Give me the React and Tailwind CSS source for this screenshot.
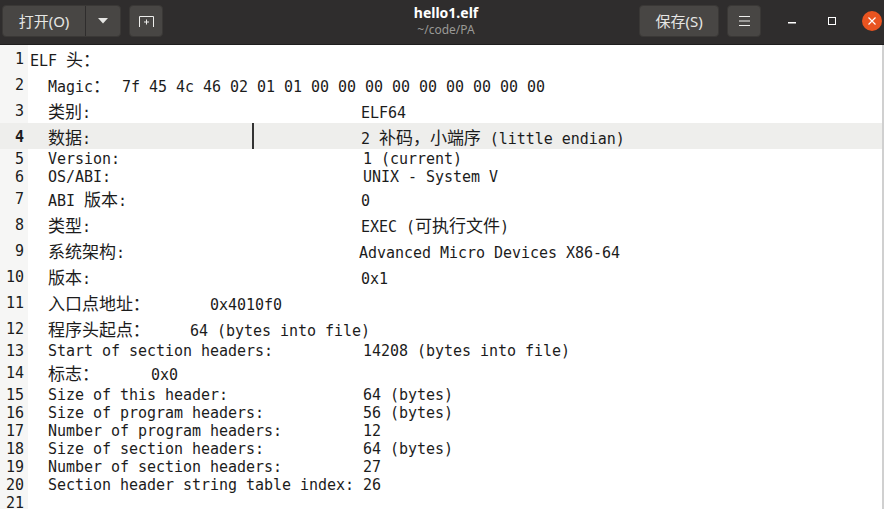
import React from "react";

const mono = "font-['DejaVu_Sans_Mono','Noto_Sans_CJK_SC',monospace]";
const ui = "font-['Noto_Sans','Noto_Sans_CJK_SC',sans-serif]";

const rows = [
  { tall: true, text: "ELF 头：", first: true },
  { tall: true, text: "Magic：", w: "w-[74px]", value: "7f 45 4c 46 02 01 01 00 00 00 00 00 00 00 00 00" },
  { tall: true, text: "类别:", w: "w-[313px]", value: "ELF64" },
  { tall: true, text: "数据:", w: "w-[313px]", value: "2 补码，小端序 (little endian)", current: true },
  { text: "Version:", w: "w-[315px]", value: "1 (current)" },
  { text: "OS/ABI:", w: "w-[315px]", value: "UNIX - System V" },
  { tall: true, text: "ABI 版本:", w: "w-[313px]", value: "0" },
  { tall: true, text: "类型:", w: "w-[313px]", value: "EXEC (可执行文件)" },
  { tall: true, text: "系统架构:", w: "w-[311px]", value: "Advanced Micro Devices X86-64" },
  { tall: true, text: "版本:", w: "w-[313px]", value: "0x1" },
  { tall: true, text: "入口点地址：", w: "w-[162px]", value: "0x4010f0" },
  { tall: true, text: "程序头起点：", w: "w-[142px]", value: "64 (bytes into file)" },
  { text: "Start of section headers:", w: "w-[315px]", value: "14208 (bytes into file)" },
  { tall: true, text: "标志：", w: "w-[103px]", value: "0x0" },
  { text: "Size of this header:", w: "w-[315px]", value: "64 (bytes)" },
  { text: "Size of program headers:", w: "w-[315px]", value: "56 (bytes)" },
  { text: "Number of program headers:", w: "w-[315px]", value: "12" },
  { text: "Size of section headers:", w: "w-[315px]", value: "64 (bytes)" },
  { text: "Number of section headers:", w: "w-[315px]", value: "27" },
  { text: "Section header string table index:", w: "w-[315px]", value: "26" },
  { text: "" },
];

// CJK runs are a bit larger than the latin text next to them
function Mixed({ text }) {
  return text.split(/([\u3000-\u9fff\uff00-\uffef]+)/).map((part, i) =>
    i % 2 ? <span key={i} className="text-[17px]">{part}</span> : part
  );
}

function Btn({ className, children }) {
  return (
    <div className={`h-8 flex items-center justify-center bg-[#484644] border border-[#3a3836] rounded-[4px] text-[#e6e6e4] text-[15px] ${ui} ${className}`}>
      {children}
    </div>
  );
}

function Header() {
  return (
    <header className="h-[45px] shrink-0 flex items-center pb-[2px] bg-[#2f2d2d] border-b border-[#1f1e1e] text-white">
      <div className="flex-1 basis-0 flex items-center gap-2 pl-[2px]">
        <div className="flex h-8 rounded-[4px] bg-[#484644] border border-[#3a3836] text-[#e6e6e4] text-[15px]">
          <div className={`w-[83px] flex items-center justify-center border-r border-[#2f2d2d] ${ui}`}>打开(O)</div>
          <div className="w-[34px] flex items-center justify-center">
            <svg width="10" height="6" viewBox="0 0 10 6"><path d="M0 0h10L5 5.5z" fill="#e6e6e4" /></svg>
          </div>
        </div>
        <Btn className="w-[34px]">
          <svg width="15" height="11" viewBox="0 0 15 11" fill="none" stroke="#eeeeec" strokeWidth="1">
            <path d="M.5 11V.5h14V11" />
            <path d="M7.5 3.5v5M5 6h5" />
          </svg>
        </Btn>
      </div>
      <div className="flex flex-col items-center pl-[6px] leading-none">
        <span className={`text-[14px] font-bold leading-[17px] ${ui}`}>hello1.elf</span>
        <span className={`text-[12px] leading-[17px] text-[#9a9996] ${ui}`}>~/code/PA</span>
      </div>
      <div className="flex-1 basis-0 flex items-center justify-end">
        <Btn className="w-[80px] mr-2">保存(S)</Btn>
        <Btn className="w-[34px]">
          <svg width="11" height="10" viewBox="0 0 11 10" stroke="#eeeeec" strokeWidth="1">
            <path d="M0 .5h11M0 5h11M0 9.5h11" />
          </svg>
        </Btn>
        <div className="w-[62px] flex justify-center pt-[4px]">
          <svg width="8" height="2" viewBox="0 0 8 2"><rect width="8" height="1.5" fill="#fff" /></svg>
        </div>
        <div className="w-[18px] flex justify-center">
          <svg width="9" height="9" viewBox="0 0 9 9" fill="none" stroke="#fff" strokeWidth="1"><rect x=".5" y=".5" width="7" height="7" /></svg>
        </div>
        <div className="w-[20px] h-[20px] rounded-full bg-[#e95420] flex items-center justify-center ml-[21px] mr-[2px]">
          <svg width="10" height="10" viewBox="0 0 10 10" stroke="#fff" strokeWidth="1.2"><path d="M1.5 1.5l7 7M8.5 1.5l-7 7" /></svg>
        </div>
      </div>
    </header>
  );
}

export default function App() {
  return (
    <div className="w-[884px] h-[509px] flex flex-col overflow-hidden bg-white">
      <Header />
      <main className={`relative flex-1 overflow-hidden border-r-2 border-[#d0d0d0] text-[15px] tracking-[-0.03px] leading-[18px] text-[#1c1c1c] ${mono}`}>
        {rows.map((row, i) => (
          <div key={i} className={`flex items-center ${row.tall ? "h-[26px]" : "h-[18px]"} ${row.current ? "bg-[#eeeeec]" : ""}`}>
            <div className={`w-[28px] h-full shrink-0 flex items-center justify-end pr-[4px] ${row.tall ? "pt-[2px]" : "pt-[2px]"} ${row.current ? "font-bold" : "bg-[#f6f6f5]"}`}>
              {i + 1}
            </div>
            <div className={`h-full flex items-center whitespace-pre ${row.tall ? "pt-[5px]" : "pt-[2px]"} ${row.first ? "pl-[2px]" : "pl-[20px]"}`}>
              <span className={`${row.w || ""} shrink-0`}><Mixed text={row.text} /></span>
              {row.value && <span><Mixed text={row.value} /></span>}
            </div>
          </div>
        ))}
        {/* text cursor */}
        <div className="absolute left-[252px] top-[78px] w-[2px] h-[26px] bg-[#333]" />
      </main>
    </div>
  );
}
